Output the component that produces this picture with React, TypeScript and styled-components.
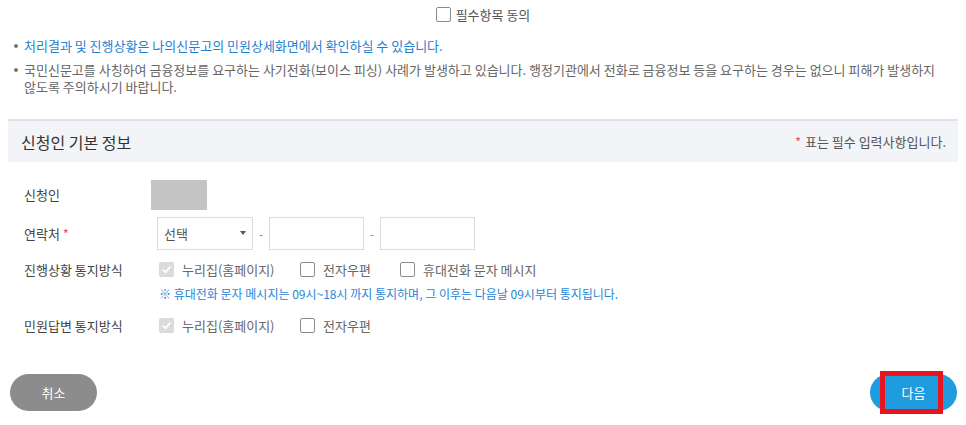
import styled, { createGlobalStyle } from "styled-components";

const GlobalStyle = createGlobalStyle`
  body {
    margin: 0;
    background: #ffffff;
    font-family: "Noto Sans CJK KR", "Noto Sans", sans-serif;
    color: #555555;
  }
`;

const Page = styled.div`
  width: 966px;
  height: 425px;
  overflow: hidden;
  position: relative;
`;

const AgreeRow = styled.label`
  display: flex;
  justify-content: center;
  align-items: center;
  gap: 5px;
  padding-top: 6px;
  height: 16px;
  font-size: 13px;
  color: #555;
`;

const Box = styled.span<{ checked?: boolean }>`
  display: inline-flex;
  align-items: center;
  justify-content: center;
  box-sizing: border-box;
  width: 15px;
  height: 15px;
  border-radius: 2px;
  border: 1px solid ${(p) => (p.checked ? "#d9d9d9" : "#8c8c8c")};
  background: ${(p) => (p.checked ? "#dcdcdc" : "#fff")};
  flex-shrink: 0;
`;

const Notice = styled.ul`
  list-style: none;
  margin: 15px 0 0;
  padding: 0 20px 0 24px;
  font-size: 13px;
  line-height: 17px;
`;

const NoticeItem = styled.li<{ blue?: boolean }>`
  position: relative;
  color: ${(p) => (p.blue ? "#1f7fd0" : "#666")};
  margin-bottom: 7px;
  &::before {
    content: "";
    position: absolute;
    left: -10px;
    top: 7px;
    width: 4px;
    height: 4px;
    border-radius: 50%;
    background: #777;
  }
`;

const SectionHead = styled.div`
  margin: 24px 8px 0;
  height: 41px;
  border-top: 2px solid #dfe2e8;
  background: #f3f4f8;
  display: flex;
  align-items: center;
  justify-content: space-between;
  padding: 0 12px 0 13px;
`;

const SectionTitle = styled.h3`
  margin: 0;
  font-size: 16px;
  font-weight: 400;
  color: #333;
`;

const Required = styled.span`
  font-size: 13px;
  color: #555;
`;

const Star = styled.span`
  color: #e0566b;
  margin-right: 4px;
`;

const Form = styled.div`
  padding: 14px 0 0 24px;
  display: flex;
  flex-direction: column;
`;

const Row = styled.div<{ h: number }>`
  display: grid;
  grid-template-columns: 127px 1fr;
  align-items: center;
  height: ${(p) => p.h}px;
`;

const Label = styled.span`
  font-size: 13px;
  color: #444;
`;

const Masked = styled.div`
  width: 56px;
  height: 30px;
  background: #c4c4c4;
`;

const Fields = styled.div`
  display: flex;
  align-items: center;
  padding-left: 6px;
`;

const Select = styled.div`
  box-sizing: border-box;
  width: 96px;
  height: 33px;
  border: 1px solid #dcdcdc;
  display: flex;
  align-items: center;
  justify-content: space-between;
  padding: 0 6px;
  font-size: 13px;
  color: #555;
`;

const Caret = styled.span`
  width: 0;
  height: 0;
  border-left: 3px solid transparent;
  border-right: 3px solid transparent;
  border-top: 4px solid #555;
`;

const Dash = styled.span`
  width: 16px;
  text-align: center;
  font-size: 12px;
  color: #888;
`;

const Input = styled.div`
  box-sizing: border-box;
  width: 95px;
  height: 33px;
  border: 1px solid #dcdcdc;
`;

const Options = styled.div`
  display: flex;
  align-items: center;
  padding-left: 8px;
`;

const Option = styled.label<{ w: number }>`
  display: flex;
  align-items: center;
  gap: 8px;
  width: ${(p) => p.w}px;
  font-size: 13px;
  color: #666;
`;

const Note = styled.div`
  padding-left: 135px;
  font-size: 12px;
  color: #1f86d8;
  height: 18px;
  line-height: 18px;
`;

const Buttons = styled.div`
  display: flex;
  justify-content: space-between;
  align-items: center;
  padding: 0 9px 0 10px;
  margin-top: 27px;
`;

const Pill = styled.button<{ primary?: boolean }>`
  width: 87px;
  height: 37px;
  border: none;
  border-radius: 19px;
  background: ${(p) => (p.primary ? "#1f9be0" : "#8c8c8c")};
  color: #fff;
  font-family: inherit;
  font-size: 13px;
  position: relative;
  cursor: pointer;
`;

const Highlight = styled.span`
  position: absolute;
  left: 10px;
  top: -3px;
  width: 63px;
  height: 43px;
  box-sizing: border-box;
  border: 5px solid #e8141f;
`;

const Check = () => (
  <svg width="11" height="11" viewBox="0 0 12 12">
    <path d="M2 6.2 L5 9 L10.2 2.8" fill="none" stroke="#fff" strokeWidth="2" />
  </svg>
);

const CheckBox = ({ checked }: { checked?: boolean }) => (
  <Box checked={checked}>{checked && <Check />}</Box>
);

export default function App() {
  return (
    <Page>
      <GlobalStyle />
      <AgreeRow>
        <CheckBox />
        필수항목 동의
      </AgreeRow>
      <Notice>
        <NoticeItem blue>처리결과 및 진행상황은 나의신문고의 민원상세화면에서 확인하실 수 있습니다.</NoticeItem>
        <NoticeItem>
          국민신문고를 사칭하여 금융정보를 요구하는 사기전화(보이스 피싱) 사례가 발생하고 있습니다. 행정기관에서 전화로
          금융정보 등을 요구하는 경우는 없으니 피해가 발생하지 않도록 주의하시기 바랍니다.
        </NoticeItem>
      </Notice>
      <SectionHead>
        <SectionTitle>신청인 기본 정보</SectionTitle>
        <Required>
          <Star>*</Star>표는 필수 입력사항입니다.
        </Required>
      </SectionHead>
      <Form>
        <Row h={37}>
          <Label>신청인</Label>
          <Masked />
        </Row>
        <Row h={40}>
          <Label>
            연락처 <Star>*</Star>
          </Label>
          <Fields>
            <Select>
              선택
              <Caret />
            </Select>
            <Dash>-</Dash>
            <Input />
            <Dash>-</Dash>
            <Input />
          </Fields>
        </Row>
        <Row h={32}>
          <Label>진행상황 통지방식</Label>
          <Options>
            <Option w={141}>
              <CheckBox checked />
              누리집(홈페이지)
            </Option>
            <Option w={100}>
              <CheckBox />
              전자우편
            </Option>
            <Option w={160}>
              <CheckBox />
              휴대전화 문자 메시지
            </Option>
          </Options>
        </Row>
        <Note>※ 휴대전화 문자 메시지는 09시~18시 까지 통지하며, 그 이후는 다음날 09시부터 통지됩니다.</Note>
        <Row h={44}>
          <Label>민원답변 통지방식</Label>
          <Options>
            <Option w={141}>
              <CheckBox checked />
              누리집(홈페이지)
            </Option>
            <Option w={100}>
              <CheckBox />
              전자우편
            </Option>
          </Options>
        </Row>
      </Form>
      <Buttons>
        <Pill>취소</Pill>
        <Pill primary>
          다음
          <Highlight />
        </Pill>
      </Buttons>
    </Page>
  );
}
